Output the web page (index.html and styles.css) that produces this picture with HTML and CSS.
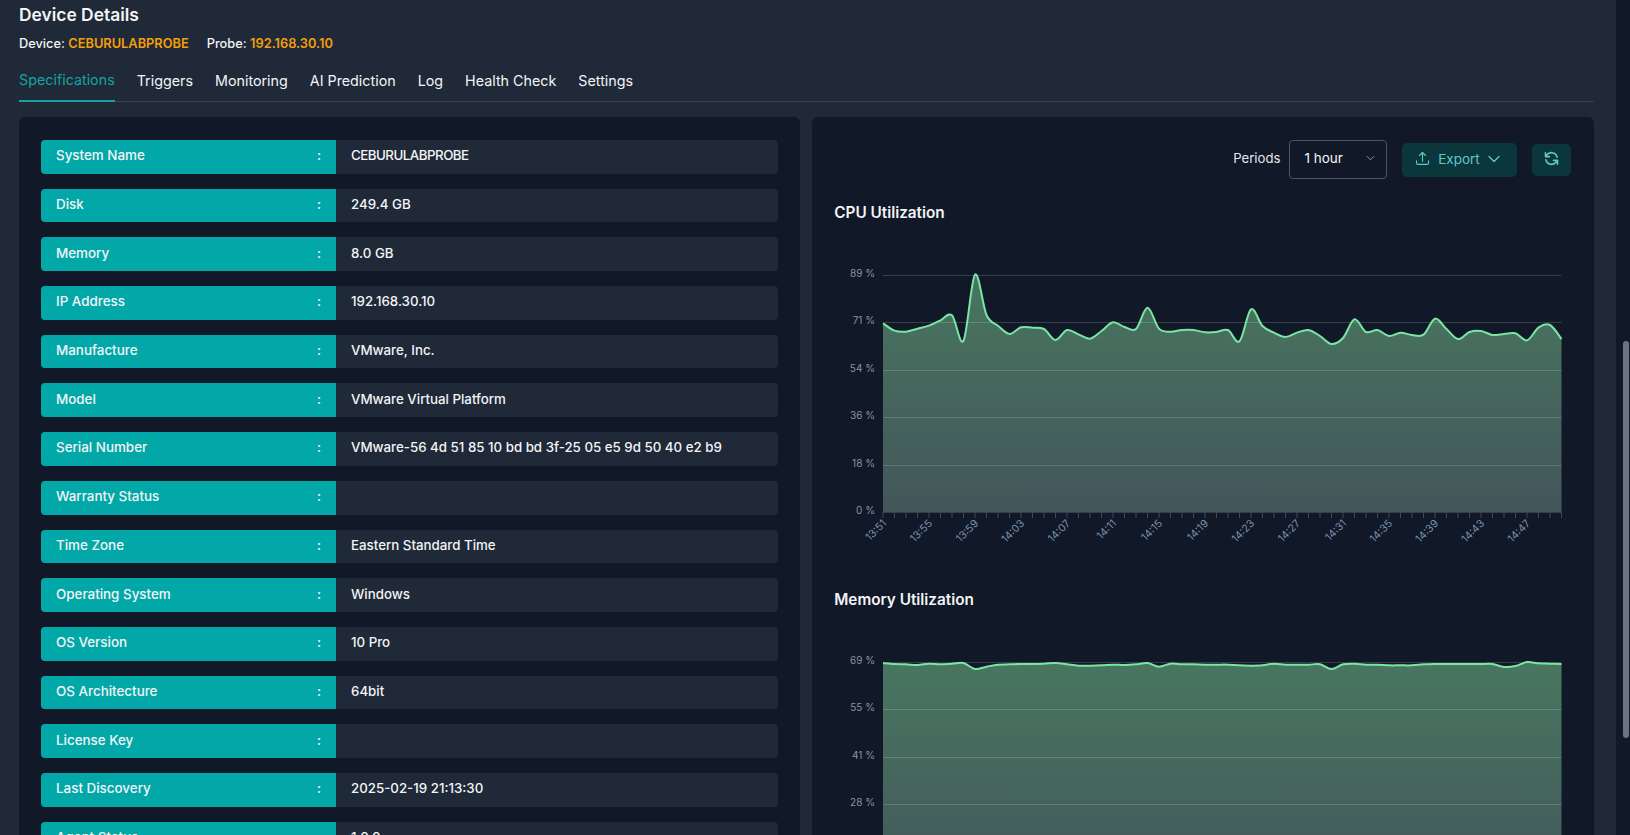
FILE: index.html
```html
<!DOCTYPE html>
<html lang="en">
<head>
<meta charset="utf-8">
<title>Device Details</title>
<link rel="stylesheet" href="styles.css">
</head>
<body>
<div class="app">
  <main class="main">
    <h1 class="title">Device Details</h1>
    <p class="meta">
      <span>Device: <b>CEBURULABPROBE</b></span>
      <span>Probe: <b>192.168.30.10</b></span>
    </p>
    <nav class="tabs">
      <a class="tab active">Specifications</a>
      <a class="tab">Triggers</a>
      <a class="tab">Monitoring</a>
      <a class="tab">AI Prediction</a>
      <a class="tab">Log</a>
      <a class="tab">Health Check</a>
      <a class="tab">Settings</a>
    </nav>
    <div class="panels">
      <section class="panel specs">
        <div class="row"><div class="label"><span>System Name</span><span>:</span></div><div class="value caps">CEBURULABPROBE</div></div>
        <div class="row"><div class="label"><span>Disk</span><span>:</span></div><div class="value">249.4 GB</div></div>
        <div class="row"><div class="label"><span>Memory</span><span>:</span></div><div class="value">8.0 GB</div></div>
        <div class="row"><div class="label"><span>IP Address</span><span>:</span></div><div class="value">192.168.30.10</div></div>
        <div class="row"><div class="label"><span>Manufacture</span><span>:</span></div><div class="value">VMware, Inc.</div></div>
        <div class="row"><div class="label"><span>Model</span><span>:</span></div><div class="value">VMware Virtual Platform</div></div>
        <div class="row"><div class="label"><span>Serial Number</span><span>:</span></div><div class="value">VMware-56 4d 51 85 10 bd bd 3f-25 05 e5 9d 50 40 e2 b9</div></div>
        <div class="row"><div class="label"><span>Warranty Status</span><span>:</span></div><div class="value"></div></div>
        <div class="row"><div class="label"><span>Time Zone</span><span>:</span></div><div class="value">Eastern Standard Time</div></div>
        <div class="row"><div class="label"><span>Operating System</span><span>:</span></div><div class="value">Windows</div></div>
        <div class="row"><div class="label"><span>OS Version</span><span>:</span></div><div class="value">10 Pro</div></div>
        <div class="row"><div class="label"><span>OS Architecture</span><span>:</span></div><div class="value">64bit</div></div>
        <div class="row"><div class="label"><span>License Key</span><span>:</span></div><div class="value"></div></div>
        <div class="row"><div class="label"><span>Last Discovery</span><span>:</span></div><div class="value">2025-02-19 21:13:30</div></div>
        <div class="row"><div class="label"><span>Agent Status</span><span>:</span></div><div class="value">1.0.0</div></div>
      </section>
      <section class="panel charts">
        <div class="toolbar">
          <span class="periods">Periods</span>
          <div class="select"><span>1 hour</span>
            <svg class="select-caret" viewBox="0 0 10 6" width="9" height="6"><path d="M1 1l4 4 4-4" fill="none" stroke="#9ca3af" stroke-width="1"/></svg>
          </div>
          <button class="btn export">
            <svg viewBox="0 0 16 16" width="15" height="15" fill="none" stroke="currentColor" stroke-width="1.2" stroke-linecap="round" stroke-linejoin="round"><path d="M8 11V1.8M4.8 4.8L8 1.6l3.2 3.2M1.6 10.5v2.2c0 .9.7 1.6 1.6 1.6h9.6c.9 0 1.6-.7 1.6-1.6v-2.2"/></svg>
            <span>Export</span>
            <svg viewBox="0 0 12 8" width="12" height="8" fill="none" stroke="currentColor" stroke-width="1.3" stroke-linecap="round" stroke-linejoin="round"><path d="M1 1.5l5 5 5-5"/></svg>
          </button>
          <button class="btn refresh">
            <svg viewBox="0 0 16 16" width="15" height="15" fill="none" stroke="currentColor" stroke-width="1.7" stroke-linecap="round" stroke-linejoin="round"><path d="M14 6.6A6.2 6.2 0 0 0 3 4.2L1.6 6M2 9.4a6.2 6.2 0 0 0 11 2.4L14.4 10M1.6 1.8V6h4.2M14.4 14.2V10h-4.2"/></svg>
          </button>
        </div>
        <div class="chart">
          <h3 class="chart-title">CPU Utilization</h3>
          <svg class="plot" id="cpu" width="781" height="345"></svg>
        </div>
        <div class="chart">
          <h3 class="chart-title">Memory Utilization</h3>
          <svg class="plot" id="mem" width="781" height="345"></svg>
        </div>
      </section>
    </div>
  </main>
  <div class="scroll-track"><div class="scroll-thumb"></div></div>
</div>
<script src="chart.js"></script>
</body>
</html>
```

FILE: styles.css
```css
* { box-sizing: border-box; }
html, body { margin: 0; height: 100%; overflow: hidden; }
body {
  background: #111827;
  color: #f3f4f6;
  font-family: Inter, "Noto Sans", sans-serif;
  font-size: 13.4px;
}
.app { display: flex; height: 835px; overflow: hidden; }
.main {
  width: 1616px;
  flex: none;
  height: 835px;
  overflow: hidden;
  background: #1f2937;
  padding: 0 22.5px 0 19px;
}
.title {
  margin: 0;
  height: 29px;
  line-height: 29px;
  font-size: 17.4px;
  font-weight: 600;
  color: #f3f4f6;
}
.meta {
  display: flex;
  gap: 18px;
  margin: 5px 0 0;
  height: 20px;
  line-height: 20px;
  font-size: 12.8px;
  font-weight: 500;
}
.meta b { color: #f59e0b; font-weight: 600; }
.tabs {
  display: flex;
  gap: 22px;
  height: 48px;
  border-bottom: 1px solid #374151;
}
.tab {
  display: block;
  height: 48px;
  padding-top: 17px;
  line-height: 20px;
  font-size: 14.3px;
  color: #f3f4f6;
}
.tab.active {
  padding-top: 16px;
  color: #14a3a3;
  border-bottom: 2px solid #14a3a3;
}
.panels {
  display: grid;
  grid-template-columns: 1fr 1fr;
  gap: 12px;
  margin-top: 15px;
}
.panel {
  background: #111827;
  border-radius: 6px;
  height: 900px;
  overflow: hidden;
}
.specs {
  display: flex;
  flex-direction: column;
  gap: 15px;
  padding: 23px 22px;
}
.row { display: flex; height: 33.7px; flex: none; }
.label {
  width: 295px;
  flex: none;
  display: flex;
  justify-content: space-between;
  align-items: center;
  padding: 0 15px 3px;
  background: #02a8a8;
  border-radius: 4px 0 0 4px;
  font-weight: 500;
  color: #f3f4f6;
}
.value {
  flex: 1;
  display: flex;
  align-items: center;
  padding: 0 15px 3px;
  background: #1f2937;
  border-radius: 0 4px 4px 0;
  font-size: 13.3px;
  font-weight: 500;
  color: #f3f4f6;
}
.value.caps { letter-spacing: -0.5px; }
.charts { padding: 23px 23px 0 0; }
.toolbar {
  display: flex;
  justify-content: flex-end;
  align-items: center;
  height: 39px;
  margin-bottom: 14px;
}
.periods { padding-bottom: 3px; font-size: 13.2px; color: #e5e7eb; margin-right: 8px; }
.select {
  width: 98px;
  height: 39px;
  display: flex;
  justify-content: space-between;
  align-items: center;
  padding: 0 11px 3px 15px;
  border: 1px solid #4b5563;
  border-radius: 4px;
  font-size: 13.5px;
  color: #f3f4f6;
}
.btn {
  display: flex;
  align-items: center;
  justify-content: center;
  border: 0;
  background: #0b363c;
  color: #5fc9c9;
  font: inherit;
  border-radius: 5px;
}
.export { width: 115px; height: 34px; margin-left: 15px; gap: 8px; padding: 0 3px 2px 0; font-size: 13.5px; }
.refresh { width: 39px; height: 32px; margin-left: 15px; padding: 0 0 2px; }
.chart { padding-top: 10px; margin-left: 22px; }
.chart-title {
  margin: 0 0 12px;
  height: 20px;
  line-height: 19px;
  font-size: 15.3px;
  font-weight: 600;
  color: #f3f4f6;
}
.plot { display: block; margin-left: -22px; overflow: visible; }
.plot text { font-family: Inter, "Noto Sans", sans-serif; }
.y-label { fill: #8a94a3; font-size: 10px; }
.x-label { fill: #7893b0; font-size: 10.5px; }
.scroll-track { position: relative; flex: 1; background: #111827; }
.scroll-thumb {
  position: absolute;
  top: 341px;
  right: 1px;
  width: 6px;
  height: 397px;
  border-radius: 3px;
  background: #6b7280;
}
```

FILE: chart.js
```js
// Sampled readings, one per minute from 13:51, in screen units of each plot.
var cpu = [190,212,215,206,197,181,166,242,44,165,197,222,202,203,207,240,210,223,236,213,187,201,207,143,206,215,210,210,217,216,210,244,148,198,218,231,218,210,228,252,234,178,216,210,228,218,225,224,176,207,237,216,213,225,222,220,241,203,195,237];
var mem = [69,72,73,75,71,73,71,69,87,80,74,73,72,72,71,69,73,77,77,76,74,75,73,69,80,71,73,73,74,74,74,76,77,76,71,74,74,74,73,87,73,71,74,74,76,76,76,73,72,72,72,72,72,72,81,78,66,70,71,72];

var NS = "http://www.w3.org/2000/svg";
var X0 = 71, STEP = 11.5, TOP = 40, PITCH = 47.4;

function el(parent, name, attrs, text) {
  var n = document.createElementNS(NS, name);
  for (var k in attrs) n.setAttribute(k, attrs[k]);
  if (text) n.textContent = text;
  parent.appendChild(n);
  return n;
}

function smooth(pts) {
  var d = "M" + pts[0][0] + " " + pts[0][1];
  for (var i = 0; i < pts.length - 1; i++) {
    var a = pts[i - 1] || pts[i], b = pts[i], c = pts[i + 1], e = pts[i + 2] || c;
    d += "C" + (b[0] + (c[0] - a[0]) / 6).toFixed(2) + " " + (b[1] + (c[1] - a[1]) / 6).toFixed(2) +
         " " + (c[0] - (e[0] - b[0]) / 6).toFixed(2) + " " + (c[1] - (e[1] - b[1]) / 6).toFixed(2) +
         " " + c[0] + " " + c[1];
  }
  return d;
}

function pad(n) { return (n < 10 ? "0" : "") + n; }

function draw(id, raw, offset, ticks) {
  var svg = document.getElementById(id);
  var bottom = TOP + PITCH * 5;
  var right = X0 + STEP * (raw.length - 1);
  var grad = id + "-fill";
  var defs = el(svg, "defs", {});
  var g = el(defs, "linearGradient", { id: grad, gradientUnits: "userSpaceOnUse", x1: 0, x2: 0, y1: TOP, y2: bottom });
  el(g, "stop", { offset: 0, "stop-color": "#487660" });
  el(g, "stop", { offset: 1, "stop-color": "#43565a" });

  var pts = raw.map(function (v, i) { return [X0 + STEP * i, offset + v / 3]; });
  var line = smooth(pts);
  el(svg, "path", { d: line + "L" + right + " " + bottom + "L" + X0 + " " + bottom + "Z", fill: "url(#" + grad + ")" });

  ticks.forEach(function (t, i) {
    var y = Math.round(TOP + PITCH * i) + 0.5;
    el(svg, "line", { x1: X0, x2: right, y1: y, y2: y, stroke: "rgba(255,255,255,.16)" });
    el(svg, "text", { x: 63, y: y + 1, "text-anchor": "end", "class": "y-label" }, t + " %");
  });

  el(svg, "path", { d: line, fill: "none", stroke: "#79e6a4", "stroke-width": 2 });

  raw.forEach(function (_, i) {
    var x = X0 + STEP * i;
    el(svg, "line", { x1: x, x2: x, y1: bottom, y2: bottom + 6, stroke: "#3f4a59" });
    if (i % 4 === 0) {
      var m = 13 * 60 + 51 + i;
      var lx = x + 4, ly = bottom + 12;
      el(svg, "text", { x: lx, y: ly, "text-anchor": "end", "class": "x-label",
        transform: "rotate(-45 " + lx + " " + ly + ")" }, pad(Math.floor(m / 60)) + ":" + pad(m % 60));
    }
  });
}

draw("cpu", cpu, 25, [89, 71, 54, 36, 18, 0]);
draw("mem", mem, 18, [69, 55, 41, 28, 14, 0]);
```
